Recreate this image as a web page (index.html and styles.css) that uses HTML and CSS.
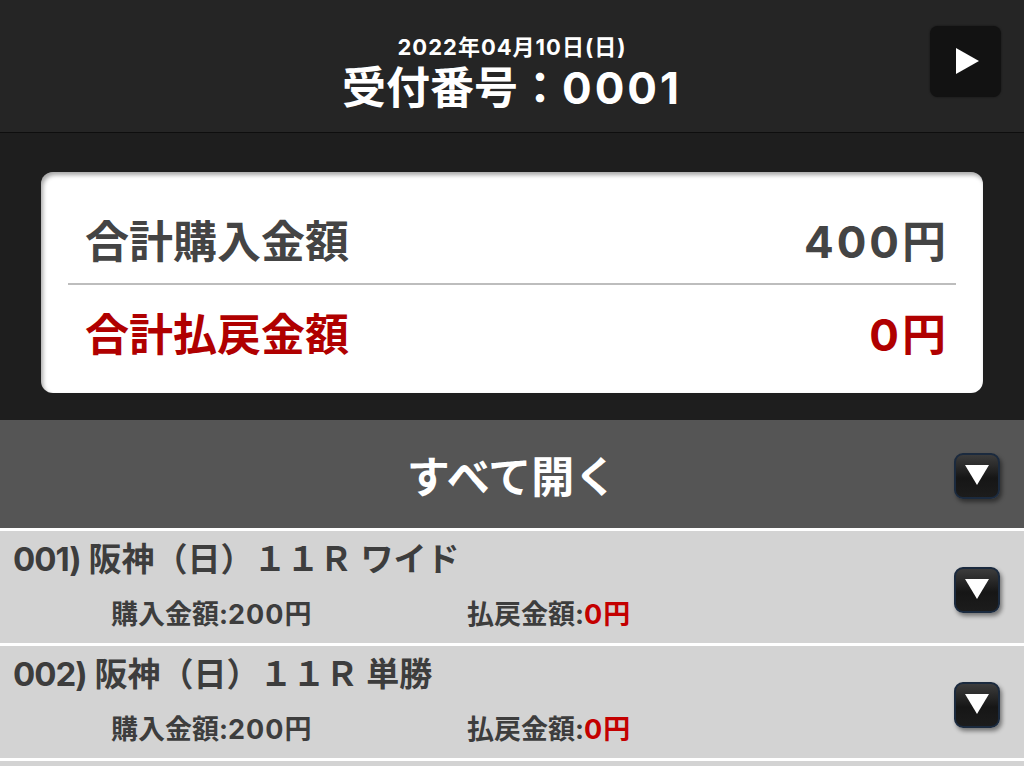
FILE: index.html
```html
<!DOCTYPE html>
<html lang="ja">
<head>
    <meta charset="UTF-8">
    <meta name="viewport" content="width=device-width, initial-scale=1.0">
    <title>受付番号：0001</title>
    <link rel="stylesheet" href="styles.css">
</head>
<body>
    <header class="top">
        <div class="top-title">
            <div class="date">2022年04月10日(日)</div>
            <div class="receipt">受付番号：<span class="num">0001</span></div>
        </div>
        <button class="play-btn" aria-label="次へ">
            <svg width="24" height="26" viewBox="0 0 24 26"><polygon points="1,0 24,13 1,26" fill="#fff"/></svg>
        </button>
    </header>

    <section class="summary">
        <div class="card">
            <div class="sum-row">
                <span>合計購入金額</span>
                <span><span class="num">400</span>円</span>
            </div>
            <div class="sum-row red">
                <span>合計払戻金額</span>
                <span><span class="num">0</span>円</span>
            </div>
        </div>
    </section>

    <div class="open-all">
        <span class="open-all-label">すべて開く</span>
        <button class="drop-btn" aria-label="開く">
            <svg width="24" height="20" viewBox="0 0 24 20"><polygon points="0,0 24,0 12,20" fill="#fff"/></svg>
        </button>
    </div>

    <ul class="tickets">
        <li class="ticket">
            <div class="ticket-info">
                <div class="ticket-title"><span class="no">001)</span> 阪神（日）１１Ｒ ワイド</div>
                <div class="ticket-sub">
                    <span class="buy">購入金額:<span class="num">200</span>円</span>
                    <span>払戻金額:<em><span class="num">0</span>円</em></span>
                </div>
            </div>
            <button class="drop-btn" aria-label="開く">
                <svg width="24" height="20" viewBox="0 0 24 20"><polygon points="0,0 24,0 12,20" fill="#fff"/></svg>
            </button>
        </li>
        <li class="ticket">
            <div class="ticket-info">
                <div class="ticket-title"><span class="no">002)</span> 阪神（日）１１Ｒ 単勝</div>
                <div class="ticket-sub">
                    <span class="buy">購入金額:<span class="num">200</span>円</span>
                    <span>払戻金額:<em><span class="num">0</span>円</em></span>
                </div>
            </div>
            <button class="drop-btn" aria-label="開く">
                <svg width="24" height="20" viewBox="0 0 24 20"><polygon points="0,0 24,0 12,20" fill="#fff"/></svg>
            </button>
        </li>
        <li class="ticket"></li>
    </ul>
</body>
</html>
```

FILE: styles.css
```css
body { margin: 0; background: #1e1e1e; font-family: Inter, "Noto Sans CJK JP", sans-serif; font-weight: bold; overflow: hidden; }
button { font: inherit; cursor: pointer; }

.top { display: grid; grid-template-columns: 1fr auto 1fr; align-items: center; height: 132px; background: #252525; border-bottom: 1px solid #0e0e0e; }
.top-title { grid-column: 2; align-self: start; text-align: center; color: #fff; padding-top: 33px; }
.date { font-size: 22px; line-height: 28px; letter-spacing: 1px; }
.receipt { font-size: 44px; line-height: 50px; margin-top: 2px; }
.receipt .num { letter-spacing: 3px; }
.play-btn { grid-column: 3; justify-self: end; margin: 0 23px 10px 0; width: 71px; height: 71px; border: 0; border-radius: 8px; background: #121212; display: flex; align-items: center; justify-content: center; padding: 0 0 0 2px; box-shadow: 0 0 2px rgba(0,0,0,.6); }

.summary { padding: 39px 41px 27px; }
.card { background: #fff; border-radius: 12px; padding: 0 27px; box-shadow: inset 2px 3px 4px rgba(0,0,0,.35); }
.sum-row { display: flex; justify-content: space-between; align-items: center; padding: 0 10px 0 17px; font-size: 44px; line-height: 60px; color: #444; }
.sum-row:first-child { height: 83px; padding-top: 28px; border-bottom: 2px solid #bdbdbd; }
.sum-row:last-child { height: 99px; padding-bottom: 9px; }
.sum-row .num { letter-spacing: 3px; }
.sum-row.red { color: #b00000; }

.open-all { display: grid; grid-template-columns: 1fr auto 1fr; align-items: center; height: 108px; background: #555; }
.open-all-label { grid-column: 2; color: #fff; font-size: 43px; }
.open-all .drop-btn { grid-column: 3; justify-self: end; margin: 3px 24px 0 0; }

.drop-btn { width: 46px; height: 46px; border: 2px solid #1b2a3e; border-radius: 9px; background: linear-gradient(#3c3c3c, #161616 55%, #1c1c1c); box-shadow: 2px 3px 4px rgba(0,0,0,.45); display: flex; align-items: center; justify-content: center; padding: 0 0 2px; }

.tickets { list-style: none; margin: 0; padding: 0; }
.ticket { display: flex; align-items: flex-start; justify-content: space-between; height: 112px; background: #d3d3d3; border-top: 3px solid #fff; color: #3d3d3d; }
.ticket-info { display: flex; flex-direction: column; padding-top: 8px; }
.ticket-title { font-size: 33px; line-height: 40px; padding-left: 13px; }
.ticket-title .no { letter-spacing: -1px; }
.ticket-sub { display: flex; font-size: 27px; line-height: 36px; padding: 18px 0 0 111px; }
.ticket-sub .num { letter-spacing: 1px; }
.ticket-sub .buy { width: 356px; }
.ticket-sub em { font-style: normal; color: #c40000; }
.ticket .drop-btn { align-self: center; margin: 6px 24px 0 0; }
```
